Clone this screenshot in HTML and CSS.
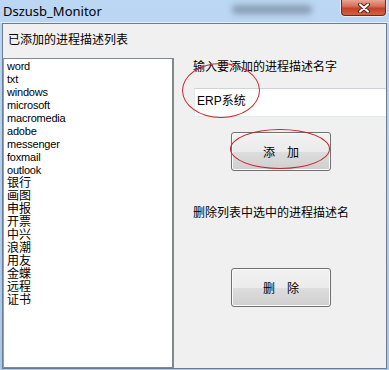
FILE: index.html
```html
<!DOCTYPE html>
<html>
<head>
    <meta charset="UTF-8">
    <title>Dszusb_Monitor</title>
    <link rel="stylesheet" href="styles.css">
</head>
<body>
    <div class="window">
        <div class="titlebar">
            <span class="title">Dszusb_Monitor</span>
            <span class="glass-blur"></span>
            <div class="close-btn">
                <svg width="14" height="10" viewBox="0 0 14 10">
                    <path d="M3 1.5 L11 8.5 M11 1.5 L3 8.5" stroke="#4a1d14" stroke-width="4" stroke-linecap="round"/>
                    <path d="M3 1.5 L11 8.5 M11 1.5 L3 8.5" stroke="#ffffff" stroke-width="2.2" stroke-linecap="round"/>
                </svg>
            </div>
        </div>

        <div class="client">
            <!-- 左側: 登録済みリスト -->
            <div class="left-col">
                <div class="list-label">已添加的进程描述列表</div>
                <div class="listbox">
                    <div class="item">word</div>
                    <div class="item">txt</div>
                    <div class="item">windows</div>
                    <div class="item">microsoft</div>
                    <div class="item">macromedia</div>
                    <div class="item">adobe</div>
                    <div class="item">messenger</div>
                    <div class="item">foxmail</div>
                    <div class="item">outlook</div>
                    <div class="item cjk">银行</div>
                    <div class="item cjk">画图</div>
                    <div class="item cjk">申报</div>
                    <div class="item cjk">开票</div>
                    <div class="item cjk">中兴</div>
                    <div class="item cjk">浪潮</div>
                    <div class="item cjk">用友</div>
                    <div class="item cjk">金蝶</div>
                    <div class="item cjk">远程</div>
                    <div class="item cjk">证书</div>
                </div>
            </div>

            <!-- 右側: 追加・削除 -->
            <div class="right-col">
                <div class="field-label">输入要添加的进程描述名字</div>
                <div class="text-input">ERP系统</div>
                <button class="win-btn add-btn">添　加</button>
                <div class="field-label delete-label">删除列表中选中的进程描述名</div>
                <button class="win-btn delete-btn">删　除</button>
            </div>
        </div>

        <!-- 赤い丸の注記 -->
        <div class="mark mark-input"></div>
        <div class="mark mark-add"></div>
    </div>
</body>
</html>
```

FILE: styles.css
```css
body {
    margin: 0;
    background-color: #a9c8ea;
    font-family: "Liberation Sans", "Noto Sans CJK SC", sans-serif;
    overflow: hidden;
}

.window {
    position: relative;
    width: 389px;
    height: 370px;
    display: flex;
    flex-direction: column;
    background: linear-gradient(#bcd7f3, #a8c8ea);
}

.titlebar {
    position: relative;
    height: 22px;
    border-bottom: 1px solid #e4eef9;
    display: flex;
    align-items: flex-start;
}

.title {
    margin: 3px 0 0 3px;
    font-family: "Noto Sans", sans-serif;
    font-size: 13px;
    line-height: 17px;
    color: #000;
}

.glass-blur {
    position: absolute;
    left: 232px;
    top: 5px;
    width: 80px;
    height: 9px;
    background-color: #7c8ea6;
    border-radius: 4px;
    filter: blur(3px);
    opacity: 0.8;
}

.close-btn {
    margin-left: auto;
    margin-right: 3px;
    width: 43px;
    height: 15px;
    border: 1px solid #6b2a20;
    border-top: none;
    border-radius: 0 0 4px 4px;
    background: linear-gradient(#e9a594, #d2694f 45%, #c2412a 55%, #d4633f);
    box-shadow: 0 0 0 1px rgba(255, 255, 255, 0.6);
    display: flex;
    justify-content: center;
    align-items: center;
}

.client {
    flex: 1;
    display: flex;
    margin: 0 2px 1px 2px;
    border: 1px solid #6b7b92;
    background-color: #f0f0f0;
}

.left-col {
    width: 171px;
    display: flex;
    flex-direction: column;
}

.list-label {
    height: 34px;
    padding: 8px 0 0 5px;
    box-sizing: border-box;
    font-size: 12px;
    line-height: 16px;
}

.listbox {
    flex: 1;
    background-color: #fff;
    border: 1px solid #828790;
    border-right-width: 2px;
    border-left-color: #9aa0a8;
    padding: 1px 0 0 3px;
}

.item {
    font-size: 11px;
    line-height: 13px;
    height: 13px;
    letter-spacing: -0.2px;
    color: #000;
}

.item.cjk {
    font-size: 12px;
    letter-spacing: 0;
}

.right-col {
    flex: 1;
    display: flex;
    flex-direction: column;
    padding-top: 35px;
}

.field-label {
    margin-left: 19px;
    font-size: 12px;
    line-height: 16px;
    color: #000;
}

.text-input {
    margin: 13px 0 0 20px;
    height: 29px;
    box-sizing: border-box;
    background-color: #fff;
    border: 1px solid #e3e9ef;
    border-top-color: #cfd3d8;
    border-right: none;
    padding: 4px 0 0 2px;
    font-size: 12px;
    line-height: 16px;
}

.win-btn {
    width: 100px;
    height: 39px;
    margin-left: 57px;
    padding: 0;
    border: 1px solid #707070;
    border-radius: 3px;
    background: linear-gradient(#f2f2f2, #ebebeb 50%, #dddddd 51%, #cfcfcf);
    box-shadow: inset 0 0 0 1px #fbfbfb;
    font-family: "Noto Sans CJK SC", sans-serif;
    font-size: 12px;
    color: #000;
}

.add-btn {
    margin-top: 15px;
}

.delete-label {
    margin-top: 34px;
}

.delete-btn {
    margin-top: 47px;
}

.mark {
    position: absolute;
    border: 1px solid #c8262a;
    border-radius: 50%;
    pointer-events: none;
}

.mark-input {
    left: 182px;
    top: 63px;
    width: 76px;
    height: 53px;
}

.mark-add {
    left: 230px;
    top: 129px;
    width: 98px;
    height: 38px;
}
```
